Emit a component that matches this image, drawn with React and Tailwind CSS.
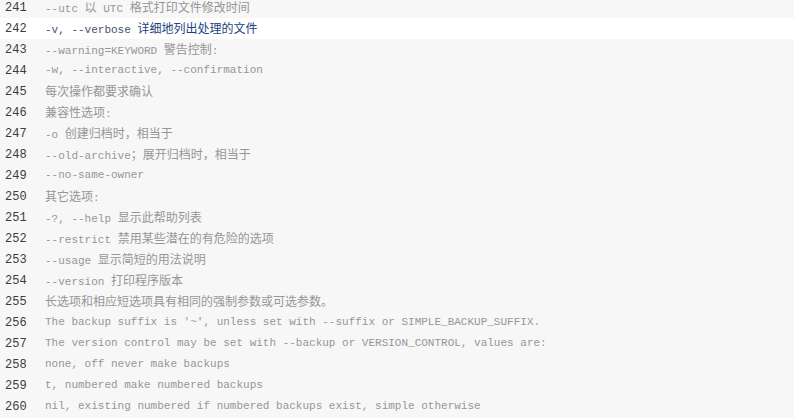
import React from 'react'

const lines = [
  { n: 241, text: '--utc 以 UTC 格式打印文件修改时间' },
  { n: 242, text: '-v, --verbose 详细地列出处理的文件', active: true },
  { n: 243, text: '--warning=KEYWORD 警告控制:' },
  { n: 244, text: '-w, --interactive, --confirmation' },
  { n: 245, text: '每次操作都要求确认' },
  { n: 246, text: '兼容性选项:' },
  { n: 247, text: '-o 创建归档时，相当于' },
  { n: 248, text: '--old-archive；展开归档时，相当于' },
  { n: 249, text: '--no-same-owner' },
  { n: 250, text: '其它选项:' },
  { n: 251, text: '-?, --help 显示此帮助列表' },
  { n: 252, text: '--restrict 禁用某些潜在的有危险的选项' },
  { n: 253, text: '--usage 显示简短的用法说明' },
  { n: 254, text: '--version 打印程序版本' },
  { n: 255, text: '长选项和相应短选项具有相同的强制参数或可选参数。' },
  { n: 256, text: "The backup suffix is '~', unless set with --suffix or SIMPLE_BACKUP_SUFFIX." },
  { n: 257, text: 'The version control may be set with --backup or VERSION_CONTROL, values are:' },
  { n: 258, text: 'none, off never make backups' },
  { n: 259, text: 't, numbered make numbered backups' },
  { n: 260, text: 'nil, existing numbered if numbered backups exist, simple otherwise' },
]

// 中文部分用 12px 的 CJK 字体，其余用等宽字体
const Segments = ({ text, active }) => {
  const parts = text.split(/([\u3000-\u303f\u4e00-\u9fff\uff00-\uffef]+)/)
  return parts.map((p, i) =>
    i % 2 === 1 ? (
      <span
        key={i}
        className={`font-['Noto_Sans_CJK_SC',sans-serif] text-[12px] ${active ? 'text-[#1d3f7e]' : 'text-[#969696]'}`}
      >
        {p}
      </span>
    ) : (
      <span key={i} className={active ? 'text-[#44506a]' : 'text-[#969696]'}>
        {p}
      </span>
    )
  )
}

export default function App() {
  return (
    <div className="w-[794px] h-[418px] overflow-hidden bg-[#f7f7f7]">
      <div className="mt-[-3px]">
        {lines.map((line) => (
          <div
            key={line.n}
            className={`flex items-center h-[21px] whitespace-pre ${line.active ? 'bg-white' : ''}`}
          >
            <span className="w-[45px] pl-[5px] shrink-0 font-['Liberation_Mono',monospace] text-[12px] text-[#3c3c3c]">
              {line.n}
            </span>
            <span className="font-['Liberation_Mono','Noto_Sans_CJK_SC',monospace] text-[11px] leading-[21px]">
              <Segments text={line.text} active={line.active} />
            </span>
          </div>
        ))}
      </div>
    </div>
  )
}
